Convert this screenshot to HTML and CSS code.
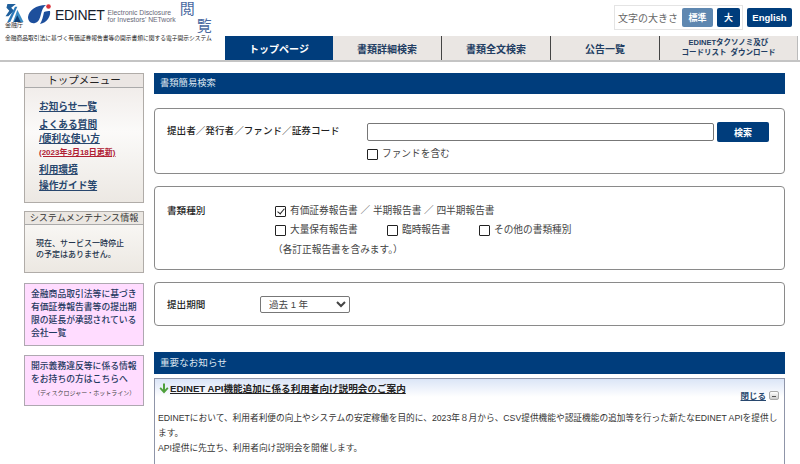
FILE: index.html
```html
<!DOCTYPE html>
<html lang="ja">
<head>
<meta charset="utf-8">
<title>EDINET 閲覧</title>
<link rel="stylesheet" href="styles.css">
</head>
<body>
<header class="header">
  <div class="brand">
    <div class="logos">
      <div class="fsa">
        <svg width="19" height="18" viewBox="0 0 19 19" class="fsa-mark">
          <path d="M2 0h9L6 4l3 3-6 6H0l4-6-3-3z" fill="#1f5f9c"/>
          <path d="M10 3h2.500L5 19H2z" fill="#2a78b8"/>
          <path d="M12.500 6L19 19H8z" fill="#3a8cc4"/>
          <path d="M12.500 12L16 19H9z" fill="#0d3f78"/>
        </svg>
        <span class="fsa-name">金融庁</span>
      </div>
      <svg width="24" height="20" viewBox="0 0 24 20" class="edinet-mark">
        <path d="M0 13C1 6 8 1 18 1c-3 2-4 5-5 9s-2 8-6 9c-4 1-7-2-7-6z" fill="#1d4f9c"/>
        <path d="M16 8c2-1 4-1 6-1 1 5-3 12-10 13 2-3 3-7 4-12z" fill="#1d4f9c"/>
        <circle cx="20.500" cy="2.500" r="2.300" fill="#d8323c"/>
      </svg>
      <span class="edinet">EDINET</span>
      <span class="tagline">Electronic Disclosure<br>for Investors' NETwork</span>
      <div class="etsuran"><span>閲</span><span class="ran">覧</span></div>
    </div>
    <p class="law">金融商品取引法に基づく有価証券報告書等の開示書類に関する電子開示システム</p>
  </div>
  <div class="header-right">
    <div class="size-row">
      <div class="size-box">
        <span class="size-label">文字の大きさ</span>
        <span class="size-btn current">標準</span>
        <span class="size-btn">大</span>
      </div>
      <span class="size-btn english">English</span>
    </div>
    <nav class="tabs">
      <a class="tab active">トップページ</a>
      <a class="tab">書類詳細検索</a>
      <a class="tab">書類全文検索</a>
      <a class="tab">公告一覧</a>
      <a class="tab small">EDINETタクソノミ及び<br>コードリスト&nbsp;&nbsp;ダウンロード</a>
    </nav>
  </div>
</header>

<div class="page">
  <aside class="side">
    <section class="menu">
      <h2 class="menu-title">トップメニュー</h2>
      <ul class="menu-list">
        <li><a>お知らせ一覧</a></li>
        <li><a>よくある質問<br>/便利な使い方</a><a class="updated">(2023年3月18日更新)</a></li>
        <li><a>利用環境</a></li>
        <li><a>操作ガイド等</a></li>
      </ul>
    </section>
    <section class="maint">
      <h2 class="maint-title">システムメンテナンス情報</h2>
      <p class="maint-text">現在、サービス一時停止<br>の予定はありません。</p>
    </section>
    <a class="pink first">金融商品取引法等に基づき<br>有価証券報告書等の提出期<br>限の延長が承認されている<br>会社一覧</a>
    <a class="pink second">開示義務違反等に係る情報<br>をお持ちの方はこちらへ<small>（ディスクロジャー・ホットライン）</small></a>
  </aside>

  <main class="main">
    <h2 class="bar">書類簡易検索</h2>

    <section class="box box-name">
      <div class="label">提出者／発行者／ファンド／証券コード</div>
      <div class="name-fields">
        <div class="search-row">
          <input class="text-input" type="text">
          <button class="search-btn">検索</button>
        </div>
        <label class="check"><input type="checkbox">ファンドを含む</label>
      </div>
    </section>

    <section class="box box-kind">
      <div class="label kind-label">書類種別</div>
      <div class="kinds">
        <label class="check"><input type="checkbox" checked>有価証券報告書 ／ 半期報告書 ／ 四半期報告書</label>
        <div class="kind-row">
          <label class="check"><input type="checkbox">大量保有報告書</label>
          <label class="check"><input type="checkbox">臨時報告書</label>
          <label class="check"><input type="checkbox">その他の書類種別</label>
        </div>
        <div class="note">（各訂正報告書を含みます。）</div>
      </div>
    </section>

    <section class="box box-period">
      <div class="label period-label">提出期間</div>
      <select class="period"><option>過去 1 年</option></select>
    </section>

    <h2 class="bar bar-notice">重要なお知らせ</h2>
    <section class="notice">
      <div class="notice-head">
        <svg width="10" height="11" viewBox="0 0 10 11" class="arrow"><path d="M5 10.500L.5 5.500l1.300-1.200L4 6.600V.5h2v6.100l2.200-2.300 1.300 1.200z" fill="#4fa03c"/></svg>
        <span class="notice-title">EDINET API機能追加に係る利用者向け説明会のご案内</span>
        <span class="close"><a>閉じる</a><span class="close-btn"></span></span>
      </div>
      <p class="notice-text">EDINETにおいて、利用者利便の向上やシステムの安定稼働を目的に、2023年８月から、CSV提供機能や認証機能の追加等を行った新たなEDINET APIを提供します。<br>API提供に先立ち、利用者向け説明会を開催します。</p>
    </section>
  </main>
</div>
</body>
</html>
```
FILE: styles.css
```css
* { box-sizing: border-box; }
html, body { margin: 0; height: 464px; overflow: hidden; background: #fff; }
body { font-family: "Liberation Sans", "Noto Sans CJK JP", sans-serif; color: #333; font-size: 10px; }
h2, p, ul { margin: 0; padding: 0; }
a { color: inherit; }

.header { display: flex; height: 62px; border-bottom: 2px solid #c4c4c4; }
.brand { width: 225px; padding: 1px 0 0 5px; flex: none; }
.logos { display: flex; align-items: flex-start; height: 33px; }
.fsa { width: 23px; flex: none; display: flex; flex-direction: column; align-items: flex-start; margin-top: 3px; }
.fsa-mark { display: block; }
.fsa-name { font-size: 6px; line-height: 7px; color: #333; white-space: nowrap; }
.edinet-mark { flex: none; margin-top: 3px; }
.edinet { font-size: 14px; line-height: 16px; color: #17202c; margin: 6px 0 0 3px; letter-spacing: -.3px; }
.tagline { font-size: 6.800px; line-height: 6.500px; color: #667; margin: 9px 0 0 3px; white-space: nowrap; }
.etsuran { display: flex; gap: 2px; font-size: 15px; line-height: 16px; color: #49699f; margin: 0 0 0 4px; }
.ran { margin-top: 17px; }
.law { font-size: 5.750px; line-height: 9px; white-space: nowrap; color: #222; }

.header-right { flex: 1; min-width: 0; display: flex; flex-direction: column; }
.size-row { display: flex; justify-content: flex-end; align-items: flex-start; height: 36px; padding: 5px 8px 0 0; gap: 4px; }
.size-box { display: flex; align-items: center; height: 25px; border: 1px solid #e4e4e4; padding: 0 2px 0 3px; gap: 4px; }
.size-label { font-size: 10px; color: #666; }
.size-btn { display: flex; align-items: center; justify-content: center; height: 19px; width: 23px; background: #003d7c; color: #fff; font-size: 9px; font-weight: 700; border-radius: 2px; }
.size-btn.current { background: #5e87b0; width: 31px; }
.size-btn.english { width: 45px; margin-top: 3px; font-size: 9.500px; }

.tabs { display: flex; height: 24px; align-items: stretch; padding-right: 2px; }
.tab { flex: 0 0 109px; display: flex; align-items: center; justify-content: center; text-align: center; background: #eae6e3; border-right: 1px solid #444; font-size: 10px; font-weight: 700; color: #223d62; }
.tab.active { flex-basis: 108px; background: #003d7c; color: #fff; border-right: 0; }
.tab.small { flex: 1; font-size: 7.500px; line-height: 10px; border-right: 1px solid #bbb; }

.page { display: flex; padding: 11px 15px 0 24px; gap: 10px; }
.side { flex: 0 0 120px; display: flex; flex-direction: column; }

.menu { height: 130px; border: 1px solid #b0aca8; background: linear-gradient(#eee9e6, #fbfaf9 45%, #ece8e3); }
.menu-title { height: 14px; border-bottom: 1px solid #aaa; font-size: 10.500px; line-height: 13px; font-weight: 400; text-align: center; color: #222; background: #ebe6e3; }
.menu-list { list-style: none; padding: 12px 0 0 14px; font-size: 9.700px; line-height: 14px; font-weight: 700; color: #28476e; }
.menu-list li { margin-bottom: 2px; }
.menu-list a { text-decoration: underline; display: block; }
.menu-list li:nth-child(2) { margin: 4px 0 3px; }
.menu-list .updated { color: #b02033; font-size: 8px; line-height: 14px; white-space: nowrap; }

.maint { height: 62px; margin-top: 8px; border: 1px solid #b0aca8; background: linear-gradient(#fbfaf8, #ece8e2); }
.maint-title { height: 13px; border-bottom: 1px solid #aaa; font-size: 9.100px; line-height: 12px; font-weight: 400; text-align: center; white-space: nowrap; color: #333; background: #ebe7e2; }
.maint-text { padding: 13px 0 0 11px; font-size: 8px; line-height: 11px; color: #24344c; font-weight: 500; }

.pink { display: block; border: 1px solid #aea8b0; background: #ffdcff; color: #1f3a5f; font-size: 8.800px; line-height: 13px; font-weight: 500; white-space: nowrap; }
.pink.first { height: 63px; margin-top: 10px; padding: 4px 0 0 6px; }
.pink.second { height: 51px; margin-top: 9px; padding: 4px 0 0 6px; }
.pink small { display: block; font-size: 6px; line-height: 9px; margin-top: 3px; margin-left: 3px; font-weight: 400; color: #444; }

.main { flex: 1; min-width: 0; }
.bar { height: 21px; background: #003d7c; color: #dfe7f0; font-size: 9.300px; line-height: 21px; font-weight: 400; padding-left: 6px; }
.box { border: 1px solid #8a8a8a; border-radius: 4px; margin-top: 12px; display: flex; }
.label { font-size: 9.600px; font-weight: 500; color: #1f1f1f; white-space: nowrap; }
.box-name { height: 66px; margin-top: 14px; padding: 14px 15px 0 12px; }
.box-name .label { width: 200px; line-height: 16px; }
.name-fields { flex: 1; }
.search-row { display: flex; gap: 3px; }
.text-input { width: 347px; height: 18px; padding: 0; border: 1px solid #777; border-radius: 2px; background: #fff; margin: 0; }
.search-btn { width: 52px; height: 20px; margin-top: -1px; border: 0; border-radius: 2px; background: #003d7c; color: #fff; font: 700 9px "Noto Sans CJK JP", sans-serif; padding: 0; }
.check { display: inline-flex; align-items: center; font-size: 9.700px; line-height: 16px; color: #444; white-space: nowrap; }
.check input { appearance: none; width: 11px; height: 11px; margin: 0 4px 0 0; border: 1px solid #222; border-radius: 1px; background: #fff; flex: none; position: relative; }
.check input:checked::after { content: ""; position: absolute; left: 3px; top: 0; width: 3px; height: 6px; border: solid #222; border-width: 0 1.500px 1.500px 0; transform: rotate(40deg); }
.name-fields .check { margin-top: 4px; }

.box-kind { height: 84px; padding: 16px 0 0 12px; }
.kind-label { width: 108px; line-height: 16px; }
.kinds { display: flex; flex-direction: column; align-items: flex-start; }
.kinds > .check { height: 16px; }
.kind-row { display: flex; margin-top: 3px; height: 16px; }
.kind-row .check:nth-child(1) { width: 112px; }
.kind-row .check:nth-child(2) { width: 92px; }
.note { font-size: 9.700px; line-height: 16px; margin: 4px 0 0 -2px; color: #444; }

.box-period { height: 44px; padding: 13px 0 0 12px; }
.period-label { width: 93px; line-height: 17px; }
.period { width: 90px; height: 17px; font: 9.500px "Liberation Sans", "Noto Sans CJK JP", sans-serif; color: #444; border: 1px solid #777; border-radius: 2px; background: #fff; padding: 0 0 0 4px; }

.bar.bar-notice { height: 22px; line-height: 22px; margin-top: 26px; font-size: 9.600px; }
.notice { height: 120px; margin-top: 4px; border: 1px solid #8f95a8; border-bottom: 0; }
.notice-head { display: flex; align-items: center; height: 18px; padding: 0 5px 0 4px; background: linear-gradient(#dbe5f7, #fff); }
.arrow { margin-right: 1px; flex: none; }
.notice-title { flex: 1; font-size: 9.600px; font-weight: 700; color: #222; text-decoration: underline; white-space: nowrap; }
.close { display: flex; align-items: center; gap: 3px; font-size: 8.500px; color: #28476e; margin-top: 14px; }
.close a { text-decoration: underline; font-weight: 700; }
.close-btn { width: 10px; height: 9px; border: 1px solid #aaa; border-radius: 2px; background: linear-gradient(#fff, #ccc); position: relative; }
.close-btn::after { content: ""; position: absolute; left: 2px; right: 2px; bottom: 2px; height: 1px; background: #555; }
.notice-text { padding: 14px 3px 0 3px; font-size: 8.700px; line-height: 15px; color: #333; }
```
